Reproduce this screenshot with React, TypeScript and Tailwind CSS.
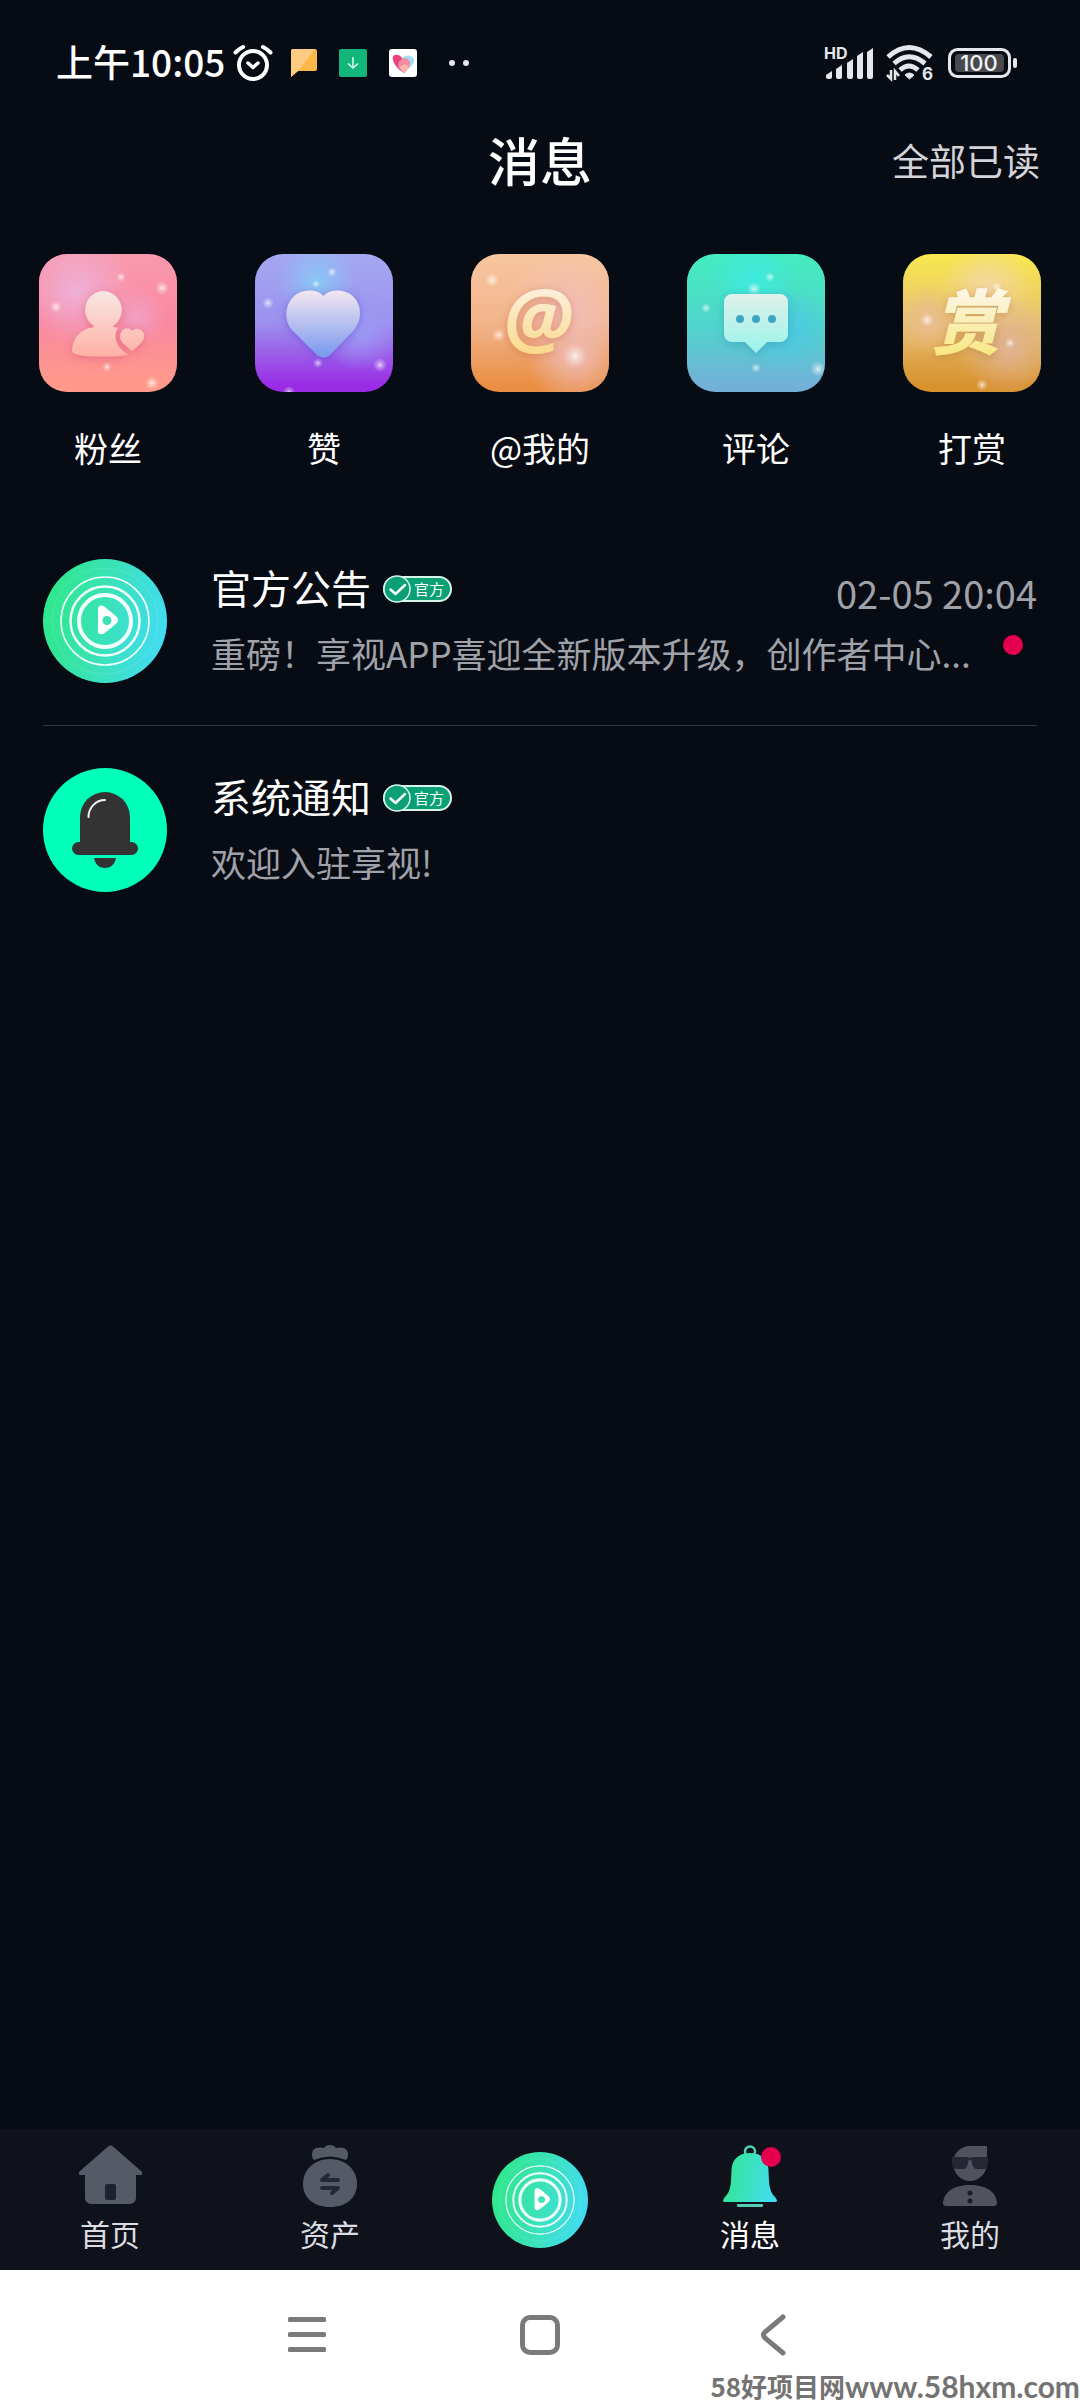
import React from "react";

interface Spark {
  x: number;
  y: number;
  r: number;
}

interface Glow extends Spark {
  color: string;
}

interface CategoryProps {
  id: string;
  label: string;
  stops: string[];
  glyphStops: string[];
  shadow: string;
  glows: Glow[];
  sparks: Spark[];
  glyph: React.ReactNode;
}

const HEART =
  "M68.500 42C62 35 50 35 42 40C30 48 28 65 37 76L62 101Q68.500 106 75 101L99 76C108 65 107 48 95 40C87 35 75 35 68.500 42Z";

const categories: CategoryProps[] = [
  {
    id: "fans",
    label: "粉丝",
    stops: ["#f99aae", "#f988a0", "#ff9a8a"],
    glyphStops: ["#f8e6e2", "#ffb3a8"],
    shadow: "#d9506f",
    glows: [
      { x: 38, y: 36, r: 56, color: "#eeb0d6" },
      { x: 98, y: 62, r: 30, color: "#f2a0c4" },
    ],
    sparks: [
      { x: 82, y: 23, r: 5 },
      { x: 123, y: 34, r: 7 },
      { x: 17, y: 53, r: 6 },
      { x: 68, y: 113, r: 5 },
      { x: 113, y: 129, r: 7 },
    ],
    glyph: (
      <>
        <path d="M64 37a19 19 0 0 1 10 35q1 1.500 4 1.500h1q-4 7-2 13q2 8 12 14q-6 2-27 2q-29 0-29-6c1-14 9-21 20-23q2 0 2-1.500A19 19 0 0 1 64 37Z" />
        <path d="M93 77c-3-4-8-3-10 0c-4 5-1 10 2 13l6 5.500q2 2 4 0l6-5.500c4-4 6-9 2-13c-3-3-8-3-10 0Z" />
      </>
    ),
  },
  {
    id: "likes",
    label: "赞",
    stops: ["#a4a8f2", "#9c90ee", "#9a2ce6"],
    glyphStops: ["#f1e6f0", "#7d9bee"],
    shadow: "#5a3fc8",
    glows: [
      { x: 62, y: 28, r: 40, color: "#88c8f4" },
      { x: 104, y: 76, r: 40, color: "#9c9cf4" },
    ],
    sparks: [
      { x: 61, y: 30, r: 4 },
      { x: 77, y: 18, r: 5 },
      { x: 13, y: 49, r: 6 },
      { x: 63, y: 109, r: 5 },
      { x: 125, y: 111, r: 7 },
      { x: 34, y: 138, r: 6 },
    ],
    glyph: <path d={HEART} />,
  },
  {
    id: "mentions",
    label: "@我的",
    stops: ["#f8c6a0", "#f2b48c", "#e98f44"],
    glyphStops: ["#fcefd8", "#fad98a"],
    shadow: "#c8643c",
    glows: [
      { x: 96, y: 58, r: 60, color: "#f2c0bc" },
      { x: 104, y: 104, r: 48, color: "#eeb8ae" },
    ],
    sparks: [
      { x: 21, y: 26, r: 7 },
      { x: 28, y: 81, r: 7 },
      { x: 104, y: 102, r: 12 },
    ],
    glyph: (
      <text
        x="67"
        y="93"
        textAnchor="middle"
        className="font-['Open_Sans'] text-[80px] font-bold italic"
      >
        @
      </text>
    ),
  },
  {
    id: "comments",
    label: "评论",
    stops: ["#44ecbe", "#4fd6cc", "#72b0d8"],
    glyphStops: ["#e2f0ea", "#98f4ea"],
    shadow: "#2a8fb0",
    glows: [
      { x: 66, y: 26, r: 44, color: "#3eeade" },
      { x: 100, y: 76, r: 44, color: "#4cc8e2" },
    ],
    sparks: [
      { x: 83, y: 23, r: 5 },
      { x: 67, y: 35, r: 7 },
      { x: 19, y: 54, r: 5 },
      { x: 69, y: 114, r: 5 },
      { x: 131, y: 115, r: 8 },
    ],
    glyph: (
      <>
        <path d="M45 40h48a8 8 0 0 1 8 8v32a8 8 0 0 1-8 8H80L69 99L58 88H45a8 8 0 0 1-8-8V48a8 8 0 0 1 8-8Z" />
        <g fill="#3ea6be">
          <circle cx="53" cy="65" r="4" />
          <circle cx="69" cy="65" r="4" />
          <circle cx="85" cy="65" r="4" />
        </g>
      </>
    ),
  },
  {
    id: "rewards",
    label: "打赏",
    stops: ["#f7e84e", "#e9c070", "#d8922e"],
    glyphStops: ["#fdf6e4", "#f8e884"],
    shadow: "#b4783c",
    glows: [
      { x: 84, y: 34, r: 46, color: "#f2d8a4" },
      { x: 26, y: 66, r: 36, color: "#e8bc90" },
      { x: 106, y: 92, r: 50, color: "#e0b496" },
    ],
    sparks: [
      { x: 94, y: 33, r: 5 },
      { x: 24, y: 66, r: 7 },
      { x: 107, y: 89, r: 5 },
      { x: 79, y: 131, r: 6 },
    ],
    glyph: (
      <text
        x="64"
        y="95"
        textAnchor="middle"
        className="text-[70px] font-black italic"
      >
        赏
      </text>
    ),
  },
];

/**
 * Rounded gradient tile with soft glows, sparkles and a glyph in the middle.
 */
function CategoryTile({
  id,
  stops,
  glyphStops,
  shadow,
  glows,
  sparks,
  glyph,
}: CategoryProps): React.JSX.Element {
  return (
    <svg
      viewBox="0 0 138 138"
      className="w-[138px] h-[138px] rounded-[28px]"
      aria-hidden="true"
    >
      <defs>
        <linearGradient id={`${id}-bg`} x1="0" y1="0" x2="0" y2="1">
          <stop offset="0" stopColor={stops[0]} />
          <stop offset="0.5" stopColor={stops[1]} />
          <stop offset="0.95" stopColor={stops[2]} />
        </linearGradient>
        <linearGradient
          id={`${id}-glyph`}
          gradientUnits="userSpaceOnUse"
          x1="0"
          y1="38"
          x2="0"
          y2="100"
        >
          <stop offset="0" stopColor={glyphStops[0]} />
          <stop offset="1" stopColor={glyphStops[1]} />
        </linearGradient>
        <radialGradient id={`${id}-spark`}>
          <stop offset="0" stopColor="#fff" stopOpacity="0.8" />
          <stop offset="0.35" stopColor="#fff" stopOpacity="0.4" />
          <stop offset="1" stopColor="#fff" stopOpacity="0" />
        </radialGradient>
        {glows.map((glow, i) => (
          <radialGradient key={i} id={`${id}-glow-${i}`}>
            <stop offset="0" stopColor={glow.color} />
            <stop offset="1" stopColor={glow.color} stopOpacity="0" />
          </radialGradient>
        ))}
        <filter id={`${id}-shadow`} x="-20%" y="-20%" width="140%" height="140%">
          <feDropShadow
            dx="0"
            dy="2"
            stdDeviation="4"
            floodColor={shadow}
            floodOpacity="0.5"
          />
        </filter>
      </defs>
      <rect width="138" height="138" fill={`url(#${id}-bg)`} />
      {glows.map((glow, i) => (
        <circle
          key={i}
          cx={glow.x}
          cy={glow.y}
          r={glow.r}
          fill={`url(#${id}-glow-${i})`}
        />
      ))}
      {sparks.map((spark, i) => (
        <circle
          key={i}
          cx={spark.x}
          cy={spark.y}
          r={spark.r}
          fill={`url(#${id}-spark)`}
        />
      ))}
      <g fill={`url(#${id}-glyph)`} filter={`url(#${id}-shadow)`}>
        {glyph}
      </g>
    </svg>
  );
}

function PlayLogo({
  id,
  className,
}: {
  id: string;
  className: string;
}): React.JSX.Element {
  return (
    <svg viewBox="0 0 124 124" fill="none" className={className} aria-hidden="true">
      <defs>
        <linearGradient id={id} x1="0" y1="0.4" x2="1" y2="0.6">
          <stop offset="0" stopColor="#2fe88a" />
          <stop offset="0.5" stopColor="#3ae2b8" />
          <stop offset="1" stopColor="#42dcf4" />
        </linearGradient>
      </defs>
      <circle cx="62" cy="62" r="62" fill={`url(#${id})`} />
      <g stroke="#f0fffc">
        <circle cx="62" cy="62" r="53" strokeOpacity="0.12" />
        <circle cx="62" cy="62" r="44" strokeWidth="1.500" />
        <circle cx="62" cy="62" r="34.500" strokeWidth="2.500" />
        <circle cx="62" cy="62" r="26" strokeWidth="4" />
      </g>
      <path
        fill="#fff"
        fillRule="evenodd"
        d="M55 50c0-3 3-4.500 6-2.500C66 51 73 57 74.500 59q1 2 0 4C73 65 66 71 60 75q-5 1-5-3ZM64 57a4.500 4.500 0 1 0 0 9a4.500 4.500 0 1 0 0-9Z"
      />
    </svg>
  );
}

function BellAvatar({ className }: { className: string }): React.JSX.Element {
  return (
    <svg viewBox="0 0 124 124" className={className} aria-hidden="true">
      <circle cx="62" cy="62" r="62" fill="#00ffb8" />
      <g fill="#333">
        <path d="M37 76V49a25 25 0 0 1 50 0v27Z" />
        <rect x="29" y="74" width="66" height="13" rx="6.500" />
        <path d="M51 90h22c-1 6-5 10-11 10s-10-4-11-10Z" />
      </g>
      <path
        d="M45.500 49c0-9 7-17 16.500-17"
        fill="none"
        stroke="#f2f2f2"
        strokeWidth="2"
        strokeLinecap="round"
      />
    </svg>
  );
}

function OfficialBadge(): React.JSX.Element {
  return (
    <span className="relative flex h-[26px] w-[69px] items-center justify-end rounded-full border-2 border-[#d8f5ea] bg-[#0a9f74] pr-1.5 text-[15px] leading-[22px] text-white">
      <svg
        viewBox="0 0 28 28"
        className="absolute -left-[2px] -top-[3px] h-7 w-7"
        aria-hidden="true"
      >
        <circle cx="14" cy="14" r="13" fill="#0a9f74" stroke="#d8f5ea" strokeWidth="1.500" />
        <path
          d="M7.500 14.500l5 4.500l9.500-9"
          fill="none"
          stroke="#fff"
          strokeWidth="2.500"
          strokeLinecap="round"
          strokeLinejoin="round"
        />
      </svg>
      官方
    </span>
  );
}

interface MessageProps {
  avatar: React.ReactNode;
  title: string;
  text: string;
  time?: string;
  unread?: boolean;
}

function Message({ avatar, title, text, time, unread }: MessageProps): React.JSX.Element {
  return (
    <li className="border-b border-[#30333a] last:border-b-0">
      <a href="#message" className="flex items-center gap-11 py-[42px]">
        {avatar}
        <div className="flex min-w-0 flex-1 flex-col gap-1">
          <div className="flex h-[60px] items-center">
            <h2 className="pb-1 text-[40px] leading-[56px] text-white">{title}</h2>
            <span className="ml-3">
              <OfficialBadge />
            </span>
            {time && (
              <time className="ml-auto pt-2 text-[38px] leading-[52px]">{time}</time>
            )}
          </div>
          <div className="flex items-center">
            <p className="min-w-0 flex-1 truncate text-[35px] leading-[60px]">{text}</p>
            {unread && <span className="mb-4 mr-3.5 h-5 w-5 rounded-full bg-[#e5004f]" />}
          </div>
        </div>
      </a>
    </li>
  );
}

function StatusBar(): React.JSX.Element {
  return (
    <div className="flex h-[126px] items-center justify-between pl-14 pr-[62px]">
      <div className="flex items-center">
        <span className="pb-1 text-[37px] font-medium leading-[52px] text-white">
          上午10:05
        </span>
        <svg viewBox="0 0 40 38" fill="none" stroke="#fff" className="ml-2 h-[38px] w-10">
          <circle cx="20" cy="21" r="14" strokeWidth="4" />
          <path
            d="M2.500 8.500Q6 5 10 3M37.500 8.500Q34 5 30 3"
            strokeWidth="4"
            strokeLinecap="round"
          />
          <path
            d="M15 19l5 4.500l5-4.500"
            strokeWidth="3.500"
            strokeLinecap="round"
            strokeLinejoin="round"
          />
        </svg>
        <svg viewBox="0 0 26 28" className="ml-[18px] h-7 w-[26px]">
          <path d="M2 0h22a2 2 0 0 1 2 2v18a2 2 0 0 1-2 2H7L0 28V2a2 2 0 0 1 2-2Z" fill="#fdb849" />
          <path d="M2 0h22L7 22L0 28V2a2 2 0 0 1 2-2Z" fill="#fdcb81" />
        </svg>
        <svg viewBox="0 0 28 28" className="ml-[22px] h-7 w-7">
          <rect width="28" height="28" rx="2" fill="#12b67a" />
          <path d="M14 8v11M9 14.500l5 4.500l5-4.500" fill="none" stroke="#d8fff0" strokeWidth="1.500" />
        </svg>
        <svg viewBox="0 0 28 28" className="ml-[22px] h-7 w-7">
          <rect width="28" height="28" rx="3" fill="#fff" />
          <path d="M13 9c4-4 10-3 12 1c1 4-3 8-6 10Z" fill="#9fe0f5" />
          <path d="M4 11c-2-6 6-7 9-2l7 9c-2 3-4 5-5 6C10 21 5 16 4 11Z" fill="#e8437e" />
          <path d="M9 15c1-5 7-8 11-4c3 4-1 9-5 13c-3-3-6-5-6-9Z" fill="#f58aa0" />
          <path d="M10 18l6-3l4 3l-5 6Z" fill="#fbb4a8" />
        </svg>
        <svg viewBox="0 0 20 6" className="ml-8 h-1.5 w-5" fill="#e4e6f0">
          <circle cx="3" cy="3" r="3" />
          <circle cx="17" cy="3" r="3" />
        </svg>
      </div>
      <div className="flex items-center font-['Inter']">
        <svg viewBox="0 -6 50 45" className="h-[45px] w-[50px]" fill="#e6e7ea">
          <text x="0" y="12" className="text-[16px] font-bold">
            HD
          </text>
          <path d="M2 28l6-4v6a2 2 0 0 1-2 2H4a2 2 0 0 1-2-2ZM12 22l6-4v12a2 2 0 0 1-2 2h-2a2 2 0 0 1-2-2ZM23 16l6-4v18a2 2 0 0 1-2 2h-2a2 2 0 0 1-2-2ZM33 9l6-4v25a2 2 0 0 1-2 2h-2a2 2 0 0 1-2-2ZM43 5l6-4v29a2 2 0 0 1-2 2h-2a2 2 0 0 1-2-2Z" />
        </svg>
        <svg viewBox="0 -6 50 48" className="ml-3 h-12 w-[50px]" fill="none" stroke="#e6e7ea">
          <path d="M2 12Q23-7 45 12M8 18.500Q23 5 39 18.500M14 25Q23 17 32 25" strokeWidth="5" />
          <path d="M19 30q4.500-4 9 0l-4.500 4Z" fill="#e6e7ea" />
          <path d="M5 25v9L1 30M9 35v-9l4 5" strokeWidth="2.500" />
          <text x="36" y="35" fill="#e6e7ea" stroke="none" className="text-[17px] font-bold">
            6
          </text>
        </svg>
        <svg viewBox="0 0 70 30" className="ml-3 h-[30px] w-[70px]">
          <rect x="1.500" y="1.500" width="60" height="27" rx="8" fill="none" stroke="#e6e7ea" strokeWidth="3" />
          <rect x="7" y="6" width="49" height="18" rx="4" fill="#48494f" />
          <rect x="65" y="10" width="4" height="10" rx="2" fill="#e6e7ea" />
          <text x="31" y="23" textAnchor="middle" fill="#f0f0f2" className="text-[22px] font-medium">
            100
          </text>
        </svg>
      </div>
    </div>
  );
}

function Tab({
  label,
  active,
  children,
}: {
  label: string;
  active?: boolean;
  children: React.ReactNode;
}): React.JSX.Element {
  return (
    <a
      href="#tab"
      aria-current={active ? "page" : undefined}
      className={`flex flex-1 flex-col items-center pt-4 pb-4 ${
        active ? "text-white" : "text-[#dcdde2]"
      }`}
    >
      {children}
      <span className="mt-1 text-[30px] leading-[42px]">{label}</span>
    </a>
  );
}

function TabBar(): React.JSX.Element {
  return (
    <nav className="flex items-center bg-[#0f111b]">
      <Tab label="首页">
        <svg viewBox="0 0 63 63" className="h-[63px] w-[63px]" fill="#545b67">
          <path d="M29 1.500q2.500-2 5 0L62 26q2 2 1 4h-6v23a6 6 0 0 1-6 6H12a6 6 0 0 1-6-6V30H0q-1-2 1-4Z" />
          <rect x="26" y="39" width="11" height="16" rx="2" fill="#1b232e" />
        </svg>
      </Tab>
      <Tab label="资产">
        <svg viewBox="0 0 54 63" className="h-[63px] w-[54px]" fill="#545b67">
          <path d="M11 15C8 12 8 5 13 3q4-1 8 0q2-3 6-3t6 3q4-1 8 0c5 2 5 9 2 12Q27 8 11 15Z" />
          <path d="M27 14c16 0 27 11 27 25S43 62 27 62S0 53 0 39s11-25 27-25Z" />
          <path
            d="M35 35H19l6-5M19 43h16l-6 5"
            fill="none"
            stroke="#222935"
            strokeWidth="4"
            strokeLinecap="round"
            strokeLinejoin="round"
          />
        </svg>
      </Tab>
      <a href="#play" aria-label="play" className="flex w-[200px] justify-center">
        <PlayLogo id="tab-logo" className="h-24 w-24" />
      </a>
      <Tab label="消息" active>
        <span className="relative">
          <svg viewBox="0 0 54 63" className="h-[63px] w-[54px]">
            <defs>
              <linearGradient id="tab-bell" x1="0" y1="0.4" x2="1" y2="0.6">
                <stop offset="0.1" stopColor="#34e69a" />
                <stop offset="1" stopColor="#44dcf0" />
              </linearGradient>
            </defs>
            <circle cx="27" cy="6.500" r="5" fill="none" stroke="#4cd6b0" strokeWidth="2.500" />
            <path
              d="M27 8c11 0 18 6 18.500 17c.5 14 .5 21 6.500 27q4 5 0 5H2q-4 0 0-5c6-6 6-13 6.500-27C9 14 16 8 27 8Z"
              fill="url(#tab-bell)"
            />
            <rect x="14" y="59" width="26" height="3" rx="1" fill="#52cdb4" />
          </svg>
          <span className="absolute -right-1 top-0.5 h-5 w-5 rounded-full bg-[#e5004f]" />
        </span>
      </Tab>
      <Tab label="我的">
        <svg viewBox="0 0 54 63" className="h-[63px] w-[54px]" fill="#50535e">
          <path d="M27 1h17v17a17 18 0 0 1-34 0C10 9 17 1 27 1Z" />
          <path
            d="M9 12h14q3 0 4 1q1-1 4-1h14v7q0 5-4 5h-7q-4 0-5-6q0-3-2-3t-2 3q-1 6-5 6h-7q-4 0-4-5Z"
            fill="#242834"
          />
          <path d="M3 61q-3 0-3-3C1 46 12 40 27 40s26 6 27 18q0 3-3 3Z" />
          <circle cx="27" cy="48" r="2.500" fill="#1b1e29" />
          <circle cx="27" cy="56" r="2.500" fill="#1b1e29" />
        </svg>
      </Tab>
    </nav>
  );
}

function SystemNav(): React.JSX.Element {
  return (
    <div className="relative flex h-[130px] justify-center bg-white text-[#7a7a7a]">
      <button type="button" aria-label="recent" className="flex w-[233px] items-center justify-center">
        <svg viewBox="0 0 38 38" className="h-[38px] w-[38px]" fill="currentColor">
          <rect y="1" width="38" height="5" rx="1.500" />
          <rect y="16" width="38" height="5" rx="1.500" />
          <rect y="31" width="38" height="5" rx="1.500" />
        </svg>
      </button>
      <button type="button" aria-label="home" className="flex w-[233px] items-center justify-center">
        <span className="h-10 w-10 rounded-[10px] border-5 border-current" />
      </button>
      <button type="button" aria-label="back" className="flex w-[233px] items-center justify-center">
        <svg
          viewBox="0 0 26 42"
          className="h-[42px] w-[26px]"
          fill="none"
          stroke="currentColor"
          strokeWidth="5"
          strokeLinecap="round"
        >
          <path d="M23 3L5 18q-3 3 0 6L23 39" />
        </svg>
      </button>
      <span className="absolute bottom-0 right-0 flex items-center whitespace-nowrap leading-[28px] text-[#737373]">
        <span className="text-[26px] font-bold">58好项目网</span>
        <span className="font-['Lato'] text-[30px] font-bold">www.58hxm.com</span>
      </span>
    </div>
  );
}

function App(): React.JSX.Element {
  return (
    <div
      lang="zh-CN"
      className="flex min-h-screen flex-col bg-[#070b13] font-['Noto_Sans_CJK_SC',sans-serif] text-[#a0a2a9]"
    >
      <StatusBar />
      <header className="relative flex h-[68px] items-center justify-center">
        <h1 className="text-[52px] font-medium leading-[68px] text-white">消息</h1>
        <button
          type="button"
          className="absolute right-10 text-[37px] leading-[52px] text-[#d4d4d8]"
        >
          全部已读
        </button>
      </header>
      <ul className="mt-[60px] grid grid-cols-5">
        {categories.map((category) => (
          <li key={category.id}>
            <a href="#category" className="flex flex-col items-center gap-[30px]">
              <CategoryTile {...category} />
              <span className="text-[34px] leading-[52px] text-white">
                {category.label}
              </span>
            </a>
          </li>
        ))}
      </ul>
      <ul className="mt-[43px] flex-1 px-[43px]">
        <Message
          avatar={<PlayLogo id="notice-logo" className="h-[124px] w-[124px] shrink-0" />}
          title="官方公告"
          text="重磅！享视APP喜迎全新版本升级，创作者中心..."
          time="02-05 20:04"
          unread
        />
        <Message
          avatar={<BellAvatar className="h-[124px] w-[124px] shrink-0" />}
          title="系统通知"
          text="欢迎入驻享视!"
        />
      </ul>
      <TabBar />
      <SystemNav />
    </div>
  );
}

export default App;
